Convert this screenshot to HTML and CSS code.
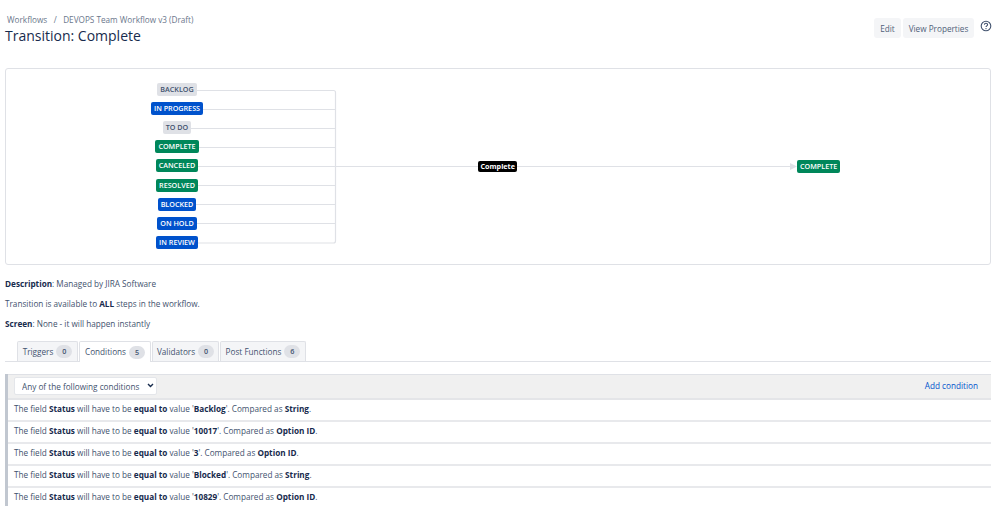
FILE: index.html
```html
<!DOCTYPE html>
<html lang="en">
<head>
<meta charset="utf-8">
<title>Transition: Complete</title>
<link rel="stylesheet" href="styles.css">
</head>
<body>
<header class="page-header">
  <div class="titles">
    <nav class="crumbs"><a>Workflows</a><span class="sep">/</span><a>DEVOPS Team Workflow v3 (Draft)</a></nav>
    <h1>Transition: Complete</h1>
  </div>
  <div class="actions">
    <button class="btn btn-edit">Edit</button>
    <button class="btn btn-view">View Properties</button>
    <svg class="help" width="12" height="12" viewBox="0 0 12 12" aria-hidden="true"><circle cx="6" cy="6" r="4.8" fill="none" stroke="#42526e" stroke-width="1.1"/><path d="M4.4 4.8c0-1 .7-1.5 1.6-1.5s1.6.6 1.6 1.4c0 1.2-1.6 1.2-1.6 2.4" fill="none" stroke="#42526e" stroke-width="1.1"/><circle cx="6" cy="8.6" r=".7" fill="#42526e"/></svg>
  </div>
</header>

<section class="diagram">
  <svg class="wires" width="986" height="197" viewBox="0 0 986 197" aria-hidden="true">
    <g fill="none" stroke="#dfe1e6" stroke-width="1.2">
      <path d="M170 21.5H327.5a2 2 0 0 1 2 2V172a2 2 0 0 1-2 2H170"/>
      <path d="M170 40.5H329.5M170 59.5H329.5M170 78.5H329.5M170 97.5H785M170 116.5H329.5M170 135.5H329.5M170 154.5H329.5"/>
    </g>
    <path d="M784 94v7l7-3.500z" fill="#dfe1e6"/>
  </svg>
  <div class="sources">
    <span class="loz grey">BACKLOG</span>
    <span class="loz blue">IN PROGRESS</span>
    <span class="loz grey">TO DO</span>
    <span class="loz green">COMPLETE</span>
    <span class="loz green">CANCELED</span>
    <span class="loz green">RESOLVED</span>
    <span class="loz blue">BLOCKED</span>
    <span class="loz blue">ON HOLD</span>
    <span class="loz blue">IN REVIEW</span>
  </div>
  <span class="loz black node-label">Complete</span>
  <span class="loz green node-target">COMPLETE</span>
</section>

<section class="meta">
  <p><b>Description</b>: Managed by JIRA Software</p>
  <p>Transition is available to <b>ALL</b> steps in the workflow.</p>
  <p><b>Screen</b>: None - it will happen instantly</p>
</section>

<ul class="tabs">
  <li class="tab tab-triggers">Triggers <span class="count">0</span></li>
  <li class="tab tab-conditions active">Conditions <span class="count">5</span></li>
  <li class="tab tab-validators">Validators <span class="count">0</span></li>
  <li class="tab tab-post">Post Functions <span class="count">6</span></li>
</ul>

<section class="panel">
  <div class="panel-head">
    <div class="mode-wrap">
      <select class="mode"><option>Any of the following conditions</option></select>
      <svg class="chev" width="7" height="5" viewBox="0 0 7 5" aria-hidden="true"><path d="M1 1l2.500 2.500L6 1" fill="none" stroke="#172b4d" stroke-width="1.400"/></svg>
    </div>
    <a class="add">Add condition</a>
  </div>
  <div class="row">The field <b>Status</b> will have to be <b>equal to</b> value '<b>Backlog</b>'. Compared as <b>String</b>.</div>
  <div class="row">The field <b>Status</b> will have to be <b>equal to</b> value '<b>10017</b>'. Compared as <b>Option ID</b>.</div>
  <div class="row">The field <b>Status</b> will have to be <b>equal to</b> value '<b>3</b>'. Compared as <b>Option ID</b>.</div>
  <div class="row">The field <b>Status</b> will have to be <b>equal to</b> value '<b>Blocked</b>'. Compared as <b>String</b>.</div>
  <div class="row">The field <b>Status</b> will have to be <b>equal to</b> value '<b>10829</b>'. Compared as <b>Option ID</b>.</div>
</section>
</body>
</html>
```
FILE: styles.css
```css
* { box-sizing: border-box; }
html, body { height: 506px; overflow: hidden; }
body {
  margin: 0;
  padding: 0 7px 0 5px;
  background: #fff;
  color: #42526e;
  font: 8.2px/12px "Open Sans", sans-serif;
}
b { font-weight: 700; color: #172b4d; }
.page-header { display: flex; justify-content: space-between; height: 68px; }
.titles { padding-top: 14px; }
.crumbs { color: #6b778c; line-height: 12px; padding-left: 2px; }
.crumbs .sep { margin: 0 6.500px; }
h1 { margin: 1px 0 0; font-size: 14px; line-height: 18px; font-weight: 500; color: #172b4d; }
.actions { display: flex; align-items: flex-start; padding-top: 18px; gap: 2px; margin-right: -1px; }
.btn {
  height: 20px; padding: 0; border: 0; border-radius: 3px;
  background: #f4f5f7; color: #505f79; font: 8.2px "Open Sans", sans-serif;
}
.btn-edit { width: 27px; }
.btn-view { width: 71px; }
.help { margin: 2px 0 0 4px; }
.diagram {
  position: relative;
  height: 197px;
  border: 1px solid #dfe1e6;
  border-radius: 3px;
  margin-top: -0.500px;
}
.wires { position: absolute; left: 0; top: 0; }
.sources {
  position: absolute; left: 121px; top: 11.500px; width: 100px;
  display: grid; grid-auto-rows: 19.12px; justify-items: center; align-items: center;
}
.loz {
  display: inline-block; position: relative;
  height: 13px; padding: 0 3px; border-radius: 2px;
  font-size: 7.2px; line-height: 13px; font-weight: 600; white-space: nowrap;
}
.grey { background: #dfe1e6; color: #42526e; }
.blue { background: #0052cc; color: #fff; }
.green { background: #00875a; color: #fff; }
.black { background: #000; color: #fff; height: 11px; line-height: 11px; font-weight: 700; padding: 0 2.500px; }
.node-label { position: absolute; left: 472px; top: 92px; }
.node-target { position: absolute; left: 791px; top: 91px; }
.meta { padding-top: 13px; height: 76px; }
.meta p { margin: 0 0 8px; height: 12px; }
.tabs { display: flex; list-style: none; margin: 0; padding: 0 0 0 12px; height: 21px; border-bottom: 1px solid #dfe1e6; }
.tab {
  display: flex; align-items: center; justify-content: center; gap: 3px;
  height: 20px; margin-right: 1px; padding-top: 1px;
  background: #f4f5f7; border: 1px solid #dfe1e6; border-bottom: 0;
  border-radius: 2px 2px 0 0; color: #42526e;
}
.tab-triggers { width: 61px; }
.tab-conditions { width: 72px; }
.tab-validators { width: 67px; }
.tab-post { width: 86px; }
.tab.active { background: #fff; height: 21px; }
.count {
  min-width: 16px; height: 13px; padding: 0 4px; border-radius: 7px;
  background: #dfe1e6; color: #42526e; font-size: 7.2px; line-height: 13px; font-weight: 600; text-align: center;
}
.panel { margin-top: 12px; border-left: 3px solid #c1c7d0; }
.panel-head {
  display: flex; justify-content: space-between; align-items: center;
  height: 26px; padding: 0 13px 0 6px;
  background: #f0f0f0; border-bottom: 2px solid #e4e5e8; border-top: 1px solid #dfe1e6;
}
.mode-wrap { position: relative; display: flex; }
.mode {
  appearance: none;
  height: 18px; width: 143px; background: #fff; border: 1px solid #e4e6ea; border-radius: 2px;
  color: #42526e; font: 8.2px "Open Sans", sans-serif; padding-left: 7px;
}
.chev { position: absolute; right: 3px; top: 6px; pointer-events: none; }
.add { color: #0052cc; }
.row { height: 22px; padding: 3.500px 0 0 6px; border-bottom: 2px solid #e8e9ec; color: #42526e; }
```
